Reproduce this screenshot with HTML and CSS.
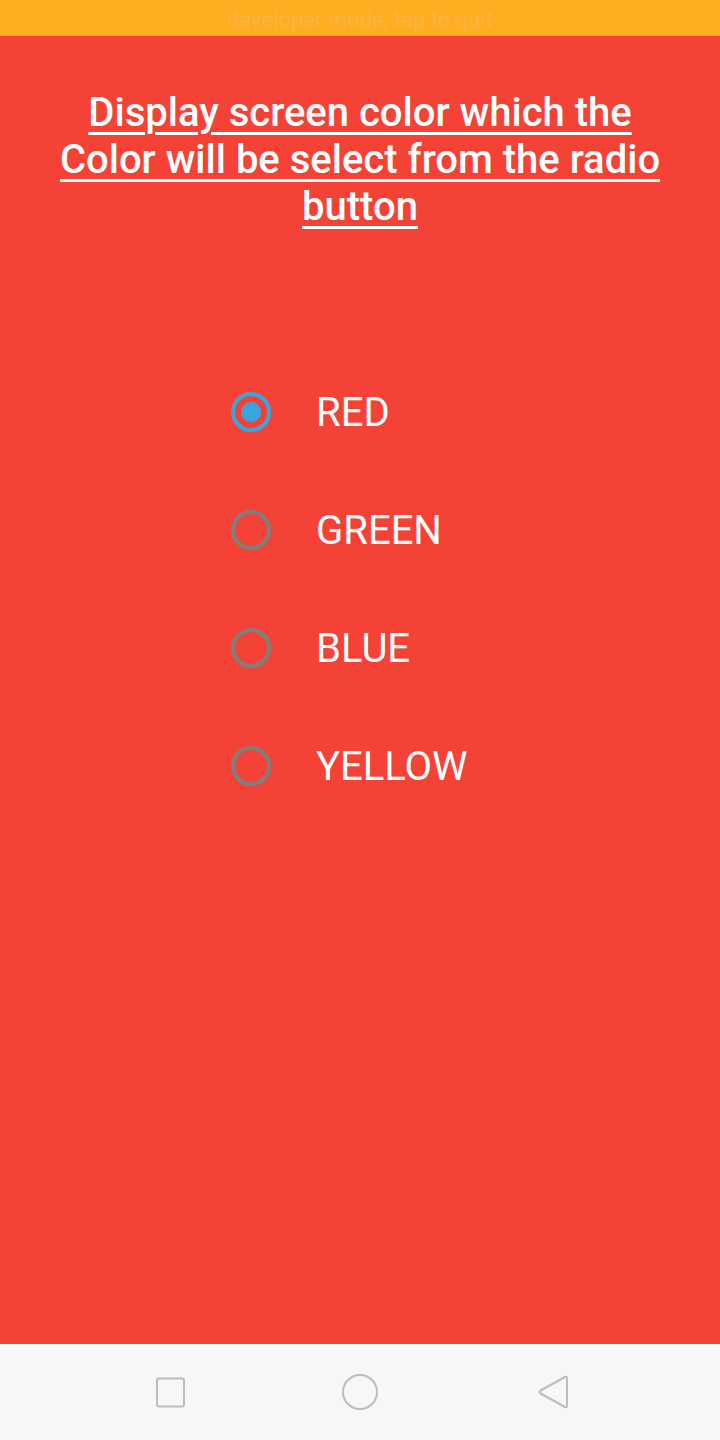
FILE: index.html
```html
<!DOCTYPE html>
<html>
<head>
<meta charset="utf-8">
<link rel="stylesheet" href="styles.css">
</head>
<body>
<div class="screen">
  <div class="status">developer mode, tap to quit</div>
  <main class="content">
    <h1 class="title">Display screen color which the Color will be select from the radio button</h1>
    <div class="group">
      <div class="option"><span class="radio checked"><span class="dot"></span></span><span class="label">RED</span></div>
      <div class="option"><span class="radio"></span><span class="label">GREEN</span></div>
      <div class="option"><span class="radio"></span><span class="label">BLUE</span></div>
      <div class="option"><span class="radio"></span><span class="label">YELLOW</span></div>
    </div>
  </main>
  <nav class="navbar">
    <svg class="nav-icon" width="32" height="32" viewBox="0 0 32 32"><rect x="3" y="2.5" width="27" height="28" rx="2" fill="none" stroke="#bdbdbd" stroke-width="2"/></svg>
    <svg class="nav-icon" width="38" height="38" viewBox="0 0 38 38"><circle cx="19" cy="19" r="17" fill="none" stroke="#bdbdbd" stroke-width="2"/></svg>
    <svg class="nav-icon" width="32" height="36" viewBox="0 0 32 36"><path d="M28 3 Q30 2 30 4.5 L30 31.5 Q30 34 28 33 L3.5 19.5 Q1.5 18 3.5 16.5 Z" fill="none" stroke="#bdbdbd" stroke-width="2" stroke-linejoin="round"/></svg>
  </nav>
</div>
</body>
</html>
```

FILE: styles.css
```css
html, body {
  margin: 0;
  padding: 0;
}
body {
  width: 720px;
  height: 1440px;
  overflow: hidden;
  font-family: Roboto, "Liberation Sans", sans-serif;
}
.screen {
  display: flex;
  flex-direction: column;
  height: 1440px;
}
.status {
  height: 36px;
  background: #ffad21;
  color: #fab540;
  font-size: 22px;
  line-height: 40px;
  text-align: center;
  flex-shrink: 0;
}
.content {
  flex: 1;
  background: #f44336;
  display: flex;
  flex-direction: column;
  align-items: center;
}
.title {
  margin: 53px 50px 0;
  color: #fff;
  font-size: 40px;
  font-weight: 500;
  line-height: 47px;
  text-align: center;
  text-decoration: underline;
  text-decoration-thickness: 3px;
  text-underline-offset: 6px;
}
.group {
  margin-top: 162px;
  align-self: stretch;
  padding-left: 231px;
  display: flex;
  flex-direction: column;
  gap: 78px;
}
.option {
  display: flex;
  align-items: center;
  height: 40px;
}
.radio {
  width: 40px;
  height: 40px;
  box-sizing: border-box;
  border: 4px solid #7f7f7f;
  border-radius: 50%;
  display: flex;
  align-items: center;
  justify-content: center;
  flex-shrink: 0;
}
.radio.checked {
  border-color: #3aa5dc;
}
.dot {
  width: 20px;
  height: 20px;
  border-radius: 50%;
  background: #3aa5dc;
}
.label {
  margin-left: 45px;
  color: #fff;
  font-size: 40px;
}
.navbar {
  height: 96px;
  flex-shrink: 0;
  background: #f7f7f7;
  display: grid;
  grid-template-columns: 190px 190px 196px;
  align-items: center;
  justify-items: center;
  padding-left: 75px;
}
```
